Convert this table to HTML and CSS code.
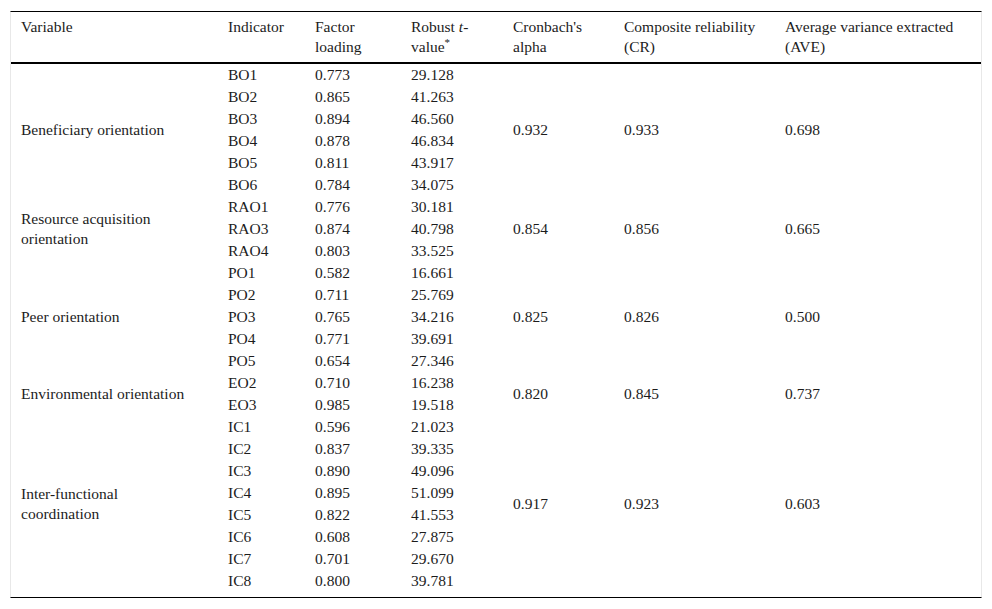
FILE: index.html
```html
<!DOCTYPE html>
<html>
<head>
<meta charset="utf-8">
<link rel="stylesheet" href="styles.css">
</head>
<body>
<div class="wrap">
<table class="tbl">
<colgroup>
<col class="c1"><col class="c2"><col class="c3"><col class="c4"><col class="c5"><col class="c6"><col class="c7">
</colgroup>
<thead>
<tr>
<th>Variable</th>
<th>Indicator</th>
<th>Factor<br>loading</th>
<th>Robust <i>t</i>-<br>value<sup>*</sup></th>
<th>Cronbach's<br>alpha</th>
<th>Composite reliability<br>(CR)</th>
<th>Average variance extracted<br>(AVE)</th>
</tr>
</thead>
<tbody>
<tr><td rowspan="6" class="mid">Beneficiary orientation</td><td>BO1</td><td>0.773</td><td>29.128</td><td rowspan="6" class="mid">0.932</td><td rowspan="6" class="mid">0.933</td><td rowspan="6" class="mid">0.698</td></tr>
<tr><td>BO2</td><td>0.865</td><td>41.263</td></tr>
<tr><td>BO3</td><td>0.894</td><td>46.560</td></tr>
<tr><td>BO4</td><td>0.878</td><td>46.834</td></tr>
<tr><td>BO5</td><td>0.811</td><td>43.917</td></tr>
<tr><td>BO6</td><td>0.784</td><td>34.075</td></tr>
<tr><td rowspan="3" class="mid">Resource acquisition<br>orientation</td><td>RAO1</td><td>0.776</td><td>30.181</td><td rowspan="3" class="mid">0.854</td><td rowspan="3" class="mid">0.856</td><td rowspan="3" class="mid">0.665</td></tr>
<tr><td>RAO3</td><td>0.874</td><td>40.798</td></tr>
<tr><td>RAO4</td><td>0.803</td><td>33.525</td></tr>
<tr><td rowspan="5" class="mid">Peer orientation</td><td>PO1</td><td>0.582</td><td>16.661</td><td rowspan="5" class="mid">0.825</td><td rowspan="5" class="mid">0.826</td><td rowspan="5" class="mid">0.500</td></tr>
<tr><td>PO2</td><td>0.711</td><td>25.769</td></tr>
<tr><td>PO3</td><td>0.765</td><td>34.216</td></tr>
<tr><td>PO4</td><td>0.771</td><td>39.691</td></tr>
<tr><td>PO5</td><td>0.654</td><td>27.346</td></tr>
<tr><td rowspan="2" class="mid">Environmental orientation</td><td>EO2</td><td>0.710</td><td>16.238</td><td rowspan="2" class="mid">0.820</td><td rowspan="2" class="mid">0.845</td><td rowspan="2" class="mid">0.737</td></tr>
<tr><td>EO3</td><td>0.985</td><td>19.518</td></tr>
<tr><td rowspan="8" class="mid">Inter-functional<br>coordination</td><td>IC1</td><td>0.596</td><td>21.023</td><td rowspan="8" class="mid">0.917</td><td rowspan="8" class="mid">0.923</td><td rowspan="8" class="mid">0.603</td></tr>
<tr><td>IC2</td><td>0.837</td><td>39.335</td></tr>
<tr><td>IC3</td><td>0.890</td><td>49.096</td></tr>
<tr><td>IC4</td><td>0.895</td><td>51.099</td></tr>
<tr><td>IC5</td><td>0.822</td><td>41.553</td></tr>
<tr><td>IC6</td><td>0.608</td><td>27.875</td></tr>
<tr><td>IC7</td><td>0.701</td><td>29.670</td></tr>
<tr><td>IC8</td><td>0.800</td><td>39.781</td></tr>
</tbody>
</table>
</div>
</body>
</html>
```

FILE: styles.css
```css
html, body {
  margin: 0;
  padding: 0;
  background: #fff;
}
body {
  padding: 11px 0 0 10px;
  font-family: "Liberation Serif", "Times New Roman", serif;
  font-size: 15.5px;
  color: #1c1c1c;
}
.wrap {
  width: 970px;
  border-left: 1px solid #e8e8e8;
  border-right: 1px solid #e8e8e8;
  border-top: 1px solid #000;
  border-bottom: 1px solid #000;
  padding-bottom: 5px;
}
.tbl {
  width: 970px;
  border-collapse: collapse;
  table-layout: fixed;
}
.c1 { width: 207px; }
.c2 { width: 87px; }
.c3 { width: 96px; }
.c4 { width: 102px; }
.c5 { width: 111px; }
.c6 { width: 161px; }
.c7 { width: 206px; }
th {
  font-weight: normal;
  text-align: left;
  vertical-align: top;
  line-height: 20px;
  padding: 5px 10px 5px;
  border-bottom: 2px solid #000;
}
th sup {
  font-size: 11px;
  line-height: 0;
  vertical-align: 6px;
}
td {
  line-height: 20px;
  padding: 1px 10px;
  vertical-align: top;
  white-space: nowrap;
}
td.mid {
  vertical-align: middle;
}
```
